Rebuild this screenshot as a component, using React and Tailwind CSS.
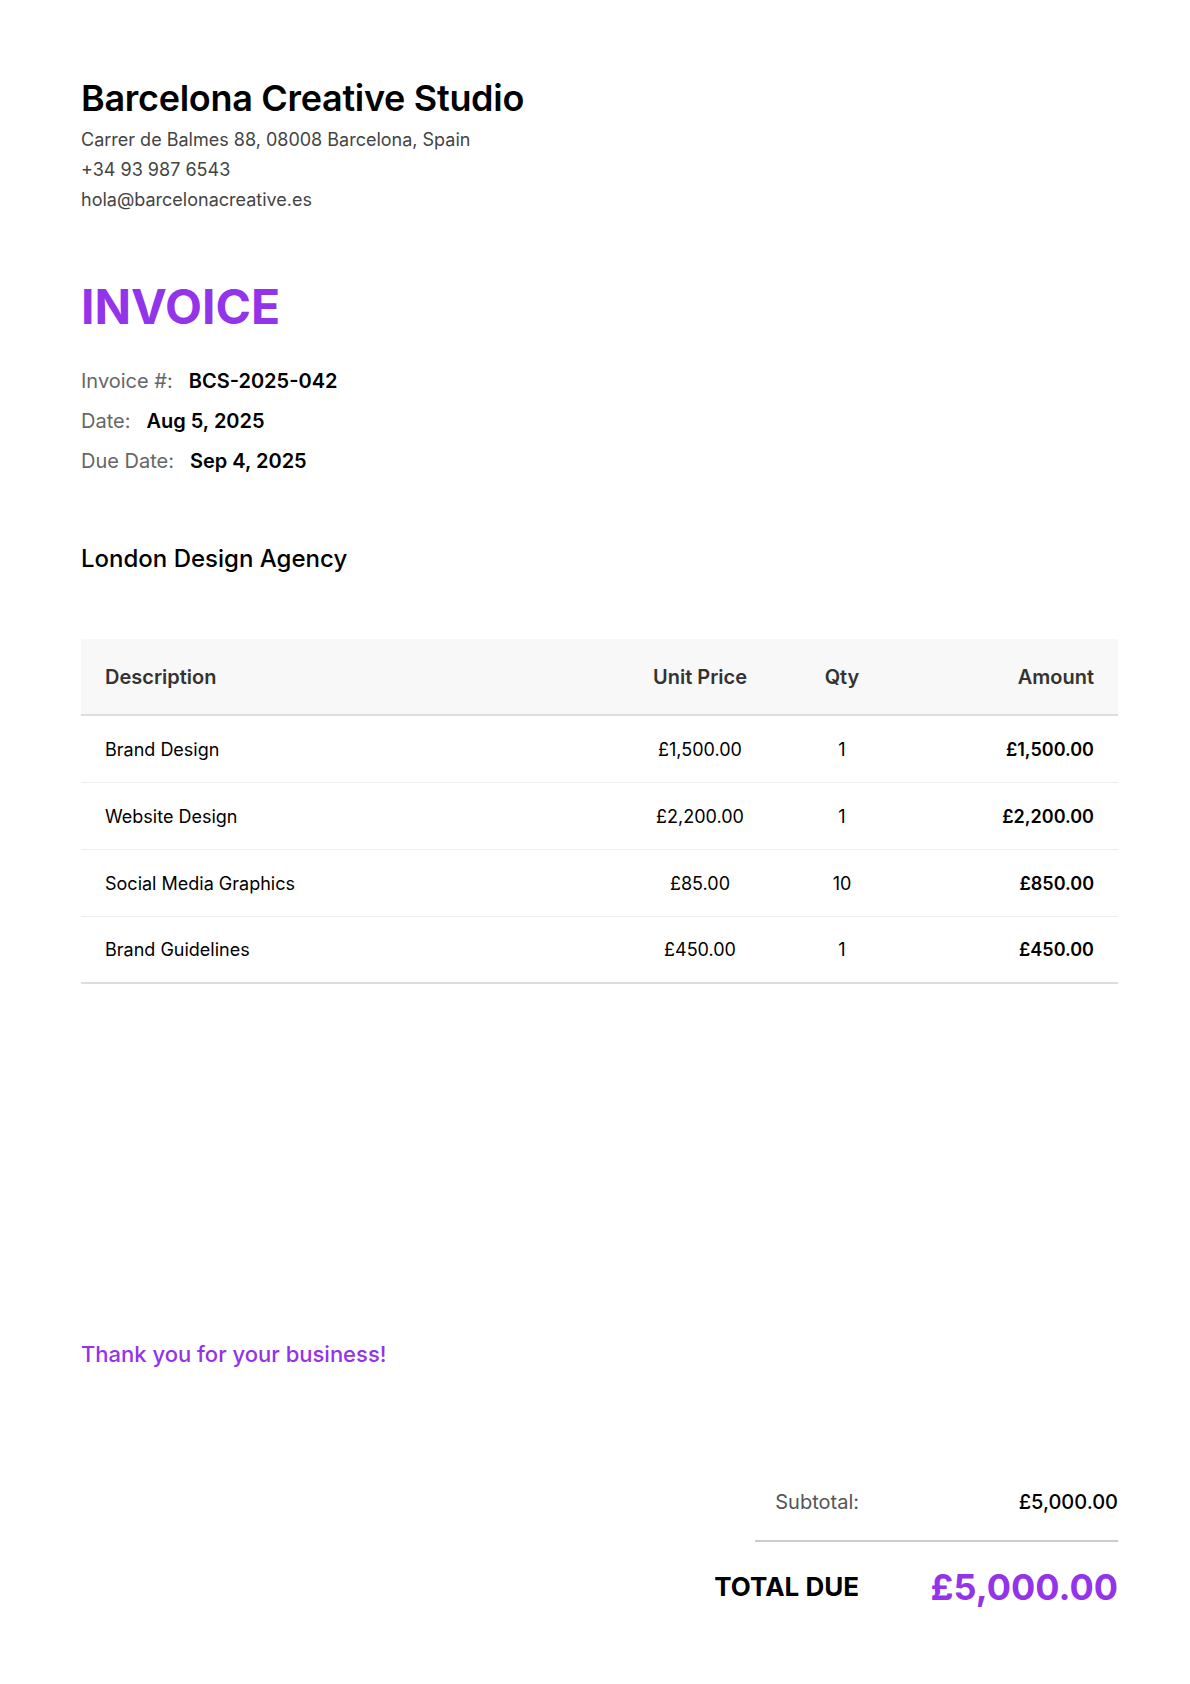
export default function App() {
  const rows = [
    ["Brand Design", "£1,500.00", "1", "£1,500.00"],
    ["Website Design", "£2,200.00", "1", "£2,200.00"],
    ["Social Media Graphics", "£85.00", "10", "£850.00"],
    ["Brand Guidelines", "£450.00", "1", "£450.00"],
  ];
  return (
    <div className="w-[1190px] min-h-[1684px] bg-white pl-[81px] pr-[72px] pt-[76px] font-[Inter,sans-serif] text-black">
      <div className="text-[36px] leading-[44px] font-semibold tracking-[-0.3px]">Barcelona Creative Studio</div>
      <div className="mt-[5px] text-[18px] leading-[30px] text-[#444]">
        <div>Carrer de Balmes 88, 08008 Barcelona, Spain</div>
        <div>+34 93 987 6543</div>
        <div>hola@barcelonacreative.es</div>
      </div>
      <div className="mt-[64px] text-[48px] leading-[56px] font-bold text-[#9333ea]">INVOICE</div>
      <div className="mt-[26px] text-[20px] leading-[40px]">
        <div className="flex gap-4"><span className="text-[#666]">Invoice #:</span><span className="font-semibold">BCS-2025-042</span></div>
        <div className="flex gap-4"><span className="text-[#666]">Date:</span><span className="font-semibold">Aug 5, 2025</span></div>
        <div className="flex gap-4"><span className="text-[#666]">Due Date:</span><span className="font-semibold">Sep 4, 2025</span></div>
      </div>
      <div className="mt-[62px] text-[24px] leading-[32px] font-medium">London Design Agency</div>
      <div className="mt-[64px] w-[1037px]">
        <div className="flex items-center h-[77px] bg-[#f8f8f8] border-b-2 border-[#dddddd] px-[24px] text-[20px] font-semibold text-[#333]">
          <div className="flex-1">Description</div>
          <div className="w-[160px] text-center">Unit Price</div>
          <div className="w-[124px] text-center">Qty</div>
          <div className="w-[190px] text-right">Amount</div>
        </div>
        {rows.map((r, i) => (
          <div key={i} className={`flex items-center h-[67px] px-[24px] text-[18px] ${i === rows.length - 1 ? "border-b-2 border-[#dddddd]" : "border-b border-[#eeeeee]"}`}>
            <div className="flex-1">{r[0]}</div>
            <div className="w-[160px] text-center">{r[1]}</div>
            <div className="w-[124px] text-center">{r[2]}</div>
            <div className="w-[190px] text-right font-semibold">{r[3]}</div>
          </div>
        ))}
      </div>
      <div className="mt-[355px] text-[22px] leading-[30px] font-medium text-[#9333ea]">Thank you for your business!</div>
      <div className="w-[1037px] flex flex-col items-end">
        <div className="mt-[118px] flex items-center justify-end text-[20px] leading-[30px]">
          <span className="text-[#555]">Subtotal:</span>
          <span className="w-[259px] text-right font-medium">£5,000.00</span>
        </div>
        <div className="mt-[23px] w-[363px] h-[2px] bg-[#cccccc]"></div>
        <div className="mt-[23px] flex items-center justify-end leading-[44px]">
          <span className="text-[26px] font-bold">TOTAL DUE</span>
          <span className="w-[259px] text-right text-[36px] font-bold text-[#9333ea]">£5,000.00</span>
        </div>
      </div>
    </div>
  );
}
